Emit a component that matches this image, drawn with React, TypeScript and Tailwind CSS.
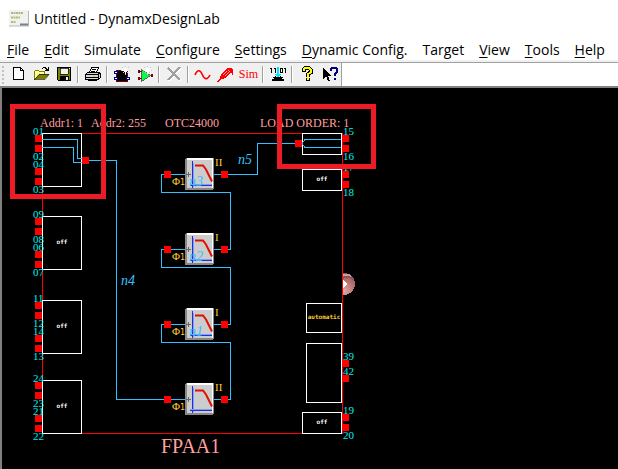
import type { ReactNode } from "react";

const MENUS: { label: string; hot: number }[] = [
  { label: "File", hot: 0 },
  { label: "Edit", hot: 0 },
  { label: "Simulate", hot: -1 },
  { label: "Configure", hot: 0 },
  { label: "Settings", hot: 0 },
  { label: "Dynamic Config.", hot: 0 },
  { label: "Target", hot: -1 },
  { label: "View", hot: 0 },
  { label: "Tools", hot: 0 },
  { label: "Help", hot: 0 },
];

function Glyph({ children }: { children: ReactNode }) {
  return (
    <svg width="17" height="17" viewBox="0 0 17 17" shapeRendering="crispEdges" fill="none" aria-hidden="true" className="shrink-0 overflow-visible">
      {children}
    </svg>
  );
}

function Tool({ name, disabled, children }: { name: string; disabled?: boolean; children: ReactNode }) {
  return (
    <button type="button" title={name} aria-label={name} disabled={disabled} className="flex h-[23px] w-[23px] shrink-0 items-center justify-center">
      {children}
    </button>
  );
}

function Separator() {
  return (
    <div className="flex h-[23px] w-[6px] shrink-0 justify-center py-[3px]">
      <div className="w-px bg-[#a0a0a0]" />
      <div className="w-px bg-white" />
    </div>
  );
}

function Sparkle({ x, y }: { x: number; y: number }) {
  return (
    <g transform={`translate(${x} ${y})`}>
      <path d="M4.5 0v9M0 4.5h9M1.5 1.5l6 6M7.5 1.5l-6 6" stroke="#c8c8c8" />
      <path d="M4 1h1v2h-1zM1 4h7v1h-7zM4 6h1v2h-1zM2 2h1v1h-1zM6 2h1v1h-1zM3 3h3v3h-3z" fill="#fff" />
    </g>
  );
}

function Toolbar() {
  return (
    <div role="toolbar" aria-label="Main" className="flex h-[23px] w-fit border-r border-[#a0a0a0] bg-[#f0f0f0]">
      <div className="flex w-[6px] flex-col items-center justify-center gap-[2px]">
        {[0, 1, 2, 3, 4].map((i) => (
          <div key={i} className="h-[2px] w-[2px] bg-[#c2c2c2]" />
        ))}
      </div>
      <Tool name="New">
        <Glyph>
          <path d="M4.500 1.500h7l3 3v9h-10z" fill="#fff" stroke="#000" />
          <path d="M11.500 1.500v3h3" stroke="#000" />
        </Glyph>
      </Tool>
      <Tool name="Open">
        <Glyph>
          <path d="M2.500 13.500v-8l1-1h3l1 1h5v3" fill="#ffff99" stroke="#808000" />
          <path d="M3 13l4-5h10l-4 5z" fill="#808000" />
          <path d="M2 13.500h11l4-5h-10l-4 5" stroke="#000" strokeWidth="0.6" shapeRendering="auto" />
          <path d="M10 2h1v-1h3v1h1v1h1v-2h1v4h-4v-1h1v-1h-1v-1h-2v1h-1z" fill="#000" />
        </Glyph>
      </Tool>
      <Tool name="Save">
        <Glyph>
          <path d="M2.500 1.500h13v13h-12l-1-1z" fill="#808000" stroke="#000" />
          <path d="M5 2h8v6h-8z" fill="#f0f0f0" stroke="#000" strokeWidth="0.7" />
          <path d="M5 10h9v4h-9z" fill="#000" />
          <path d="M11 11h2v3h-2zM14 2h1v1h-1z" fill="#f0f0f0" />
        </Glyph>
      </Tool>
      <Separator />
      <Tool name="Print">
        <Glyph>
          <path d="M5.500 6.500l2-5h7l-2 5z" fill="#fff" stroke="#000" />
          <path d="M8 3.500h4M7 5.500h4" stroke="#000" />
          <path d="M1.500 8.500l2-2h12l1 1v4l-2 2h-13z" fill="#d8d8d8" stroke="#000" />
          <path d="M1 8.500h13v5M2 11.500h12M14 8.500l2-2M3.500 14.500h9l2-2" stroke="#000" />
          <path d="M9 10h2v1h-2z" fill="#d8c800" />
        </Glyph>
      </Tool>
      <Separator />
      <Tool name="New chip">
        <Glyph>
          <path d="M3.500 4.500h11v11h-11z" fill="#000" stroke="#700000" />
          <path d="M1.500 5.500h3v2h-3zM1.500 11.500h3v2h-3zM13.500 11.500h3v2h-3z" fill="#fff" stroke="#000080" />
          <Sparkle x={8} y={0} />
        </Glyph>
      </Tool>
      <Tool name="New module">
        <Glyph>
          <path d="M5.500 3.500v12l9-6z" fill="#00ff40" stroke="#606060" />
          <path d="M2.500 5.500h3M2.500 12.500h3M14.500 9.500h2" stroke="#800000" />
          <path d="M2 4h2v3h-2zM2 11h2v3h-2zM15 8h2v3h-2z" fill="#800000" />
          <Sparkle x={7} y={0} />
        </Glyph>
      </Tool>
      <Separator />
      <Tool name="Delete" disabled>
        <Glyph>
          <path d="M4 3l12 12M16 2L4 15" stroke="#fff" strokeWidth="2" />
          <path d="M3 2l12 12M15 1L3 14" stroke="#a0a0a0" strokeWidth="2" />
        </Glyph>
      </Tool>
      <Separator />
      <Tool name="Signal generator">
        <Glyph>
          <path d="M1 9c2-5 5-6 7-1s5 7 8 1" stroke="#f00" strokeWidth="1.6" shapeRendering="auto" />
        </Glyph>
      </Tool>
      <Tool name="Probe">
        <Glyph>
          <path d="M1 16l4-5" stroke="#f00" strokeWidth="1.5" />
          <path d="M3 12l1-4 7-6h3l2 2v6l-2-4-6 6-3 1z" fill="#f00" />
          <path d="M6 9l4-4M8 10l4-4M11 4l2 2" stroke="#f0f0f0" strokeWidth="0.7" />
        </Glyph>
      </Tool>
      <Tool name="Simulate">
        <span className="font-['Liberation_Serif',serif] text-[12px] leading-[17px] text-[#f00]">Sim</span>
      </Tool>
      <Separator />
      <Tool name="Download">
        <Glyph>
          <path d="M1 2h2v5h-1v-4h-1zM5 2h2v5h-1v-4h-1zM11 2h3v5h-3zM15 2h2v5h-1v-4h-1z" fill="#000" />
          <path d="M12 3h1v3h-1z" fill="#fff" />
          <path d="M4 11h2v-1h1v1h4v-1h1v1h2v1h-1v1h2v2h-12v-2h2v-1h-1z" fill="#000" />
          <path d="M8 1h2v7h2l-3 4-3-4h2z" fill="#00e5ff" />
        </Glyph>
      </Tool>
      <Separator />
      <Tool name="About">
        <Glyph>
          <path d="M5.500 6V3.500l2-2h3l2 2v3l-3 2v2M9.500 12v3" stroke="#000" strokeWidth="4" />
          <path d="M5.500 5V3.500l2-2h3l2 2v3l-3 2v2M9.500 12v2" stroke="#ff0" strokeWidth="2" />
        </Glyph>
      </Tool>
      <Tool name="Context help">
        <Glyph>
          <path d="M2 1v12l3-3 2 5h2l-2-5h3z" fill="#000" />
          <path d="M10 5V3l1-1h4l1 1v3l-2 2v2M14 12v2" stroke="#000080" strokeWidth="2" />
        </Glyph>
      </Tool>
    </div>
  );
}

const WIRE = "#33c0ff";

type Cell = { x: number; y: number; w: number; h: number; text?: string; tint?: string };

const CELLS: Cell[] = [
  { x: 42, y: 133, w: 39, h: 53 },
  { x: 42, y: 216, w: 39, h: 53, text: "off" },
  { x: 42, y: 300, w: 39, h: 53, text: "off" },
  { x: 42, y: 380, w: 39, h: 53, text: "off" },
  { x: 302, y: 133, w: 39, h: 21 },
  { x: 302, y: 169, w: 39, h: 21, text: "off" },
  { x: 306, y: 303, w: 35, h: 29, text: "automatic", tint: "#ffcc33" },
  { x: 306, y: 343, w: 35, h: 59 },
  { x: 302, y: 412, w: 39, h: 21, text: "off" },
];

const LEFT_BANKS: { y: number; pins: [string, string, string, string] }[] = [
  { y: 133, pins: ["01", "02", "04", "03"] },
  { y: 216, pins: ["09", "08", "06", "07"] },
  { y: 300, pins: ["11", "12", "14", "13"] },
  { y: 380, pins: ["24", "23", "21", "22"] },
];

const RIGHT_LABELS: [string, number][] = [
  ["15", 135],
  ["16", 160],
  ["17", 171],
  ["18", 196],
  ["39", 360],
  ["42", 375],
  ["19", 414],
  ["20", 439],
];

const RIGHT_PINS = [135, 145, 171, 181, 360, 375, 414, 424];

const MODULES: { y: number; phase: string; net?: string }[] = [
  { y: 174, phase: "II", net: "n3" },
  { y: 249, phase: "I", net: "n2" },
  { y: 324, phase: "I", net: "n1" },
  { y: 399, phase: "II" },
];

function Pin({ x, y }: { x: number; y: number }) {
  return <rect x={x} y={y} width="7" height="7" fill="#f00" />;
}

function FilterModule({ y, phase, net }: { y: number; phase: string; net?: string }) {
  return (
    <g transform={`translate(0 ${y})`}>
      <path d="M171 .5h14M213 .5h8" stroke={WIRE} />
      <Pin x={164} y={-3} />
      <Pin x={221} y={-3} />
      <rect x="185" y="-16" width="29" height="32" rx="2" fill="#888" />
      <path d="M187-16h26v30h-26z" fill="#fff" />
      <rect x="187" y="-14" width="25" height="28" fill="#ccc" />
      <path d="M192.500-13v27" stroke="#2a2ad8" strokeWidth="1" />
      <path d="M193.500-11v24M190 10.500h22" stroke="#7aa0f0" />
      <path d="M190 11.500h22" stroke="#2a2ad8" />
      <path d="M195-8.500h8l3 4 6 12" stroke="#e01000" strokeWidth="2" shapeRendering="auto" />
      <path d="M186 .5h5M188.500-2v5" stroke="#666" />
      <g className="font-['Liberation_Serif',serif]" fill="#ffcc33">
        <text x="172" y="11" fontSize="11">
          Φ<tspan className="font-['DejaVu_Sans',sans-serif]" fontSize="8">1</tspan>
        </text>
        <text x="215" y="-8" fontSize="11">{phase}</text>
      </g>
      {net && (
        <text x="189" y="12" fontSize="14" fill={WIRE} className="font-['Liberation_Serif',serif] italic">
          {net}
        </text>
      )}
    </g>
  );
}

function Schematic() {
  return (
    <svg width="616" height="380" viewBox="2 88 616 380" shapeRendering="crispEdges" fill="none" className="block" role="img" aria-label="FPAA1 schematic">
      <defs>
        <radialGradient id="ball" cx="0.5" cy="0.8" r="0.8">
          <stop offset="0" stopColor="#e0a8a8" />
          <stop offset="0.5" stopColor="#bb7878" />
          <stop offset="1" stopColor="#8c5555" />
        </radialGradient>
        <clipPath id="ball-half">
          <path d="M343 270h20v30h-20z" />
        </clipPath>
      </defs>

      <g clipPath="url(#ball-half)">
        <circle cx="344" cy="284" r="11" fill="url(#ball)" />
        <path d="M343 278c4-2 8-1 11 2" stroke="#8a5656" strokeWidth="2" />
        <path d="M343 275c3-1 6 0 8 1" stroke="#c89c9c" strokeWidth="2" />
        <path d="M343 280l5 4-5 4z" fill="#fff" />
      </g>

      <path d="M42.500 133.500h300v300h-300z" stroke="#f00" />
      {CELLS.map((c) => (
        <g key={`${c.x}-${c.y}`}>
          <rect x={c.x + 0.5} y={c.y + 0.5} width={c.w} height={c.h} fill="#000" stroke="#fff" />
          {c.text && (
            <text x={c.x + c.w / 2 + 0.5} y={c.y + Math.floor(c.h / 2)} dy="2" textAnchor="middle" fontSize="6" fill={c.tint ?? "#fff"} className="font-['DejaVu_Sans_Mono',monospace] font-bold">
              {c.text}
            </text>
          )}
        </g>
      ))}

      <g stroke={WIRE}>
        <path d="M42 139.500h35.500v19h4.500M42 147.500h31.500v15h8.500" />
        <path d="M89 160.500h27.500v239h48" />
        <path d="M228 399.500h2.500v-57h-69v-18h3" />
        <path d="M228 324.500h2.500v-57h-69v-18h3" />
        <path d="M228 249.500h2.500v-57h-69v-18h3" />
        <path d="M228 174.500h29.500v-31h38" />
        <path d="M302 143.500l3-4h36M302 143.500l3 4h36" />
      </g>
      <Pin x={82} y={157} />
      <Pin x={295} y={140} />

      {MODULES.map((m) => (
        <FilterModule key={m.y} {...m} />
      ))}

      {LEFT_BANKS.map((b) => [2, 12, 35, 45].map((dy) => <Pin key={`${b.y}-${dy}`} x={35} y={b.y + dy} />))}
      {RIGHT_PINS.map((y) => (
        <Pin key={y} x={342} y={y} />
      ))}

      <g fill="#00f0f0" fontSize="11" className="font-['Liberation_Serif',serif]">
        {LEFT_BANKS.map((b) =>
          b.pins.map((p, i) => (
            <text key={p} x="33" y={b.y + [2, 27, 35, 60][i]}>
              {p}
            </text>
          )),
        )}
        {RIGHT_LABELS.map(([p, y]) => (
          <text key={p} x="343" y={y}>
            {p}
          </text>
        ))}
      </g>

      <g fill={WIRE} fontSize="14" className="font-['Liberation_Serif',serif] italic">
        <text x="238" y="164">n5</text>
        <text x="121" y="285">n4</text>
      </g>

      <g fill="#ff9f9f" className="font-['Liberation_Serif',serif]">
        <text x="40" y="127" fontSize="12">Addr1: 1</text>
        <text x="91" y="127" fontSize="12">Addr2: 255</text>
        <text x="165" y="127" fontSize="12">OTC24000</text>
        <text x="260" y="127" fontSize="12">LOAD ORDER: 1</text>
        <text x="161" y="453" fontSize="20">FPAA1</text>
      </g>

      <g stroke="#ed1c24" strokeWidth="5">
        <rect x="12.5" y="106.5" width="91" height="90" />
        <rect x="279.5" y="106.5" width="94" height="60" />
      </g>
    </svg>
  );
}

export default function App() {
  return (
    <div className="flex min-h-screen flex-col bg-white font-['Open_Sans','Noto_Sans',sans-serif] text-black">
      <header className="flex h-[37px] items-center gap-[5px] pl-[9px]">
        <svg width="20" height="17" viewBox="0 0 20 17" aria-hidden="true">
          <rect x="0" y="0" width="20" height="16" fill="#f1f2ee" />
          <path d="M0 16h20M19.500 1v15" stroke="#b5b8b5" />
          <path d="M2 3h12M2 7.500h9M2 12h5" stroke="#a9bd7c" strokeWidth="2" strokeDasharray="2 0.5" />
          <path d="M11 14.500h8" stroke="#77808a" strokeWidth="2" />
        </svg>
        <h1 className="text-[14px] leading-[20px]">Untitled - DynamxDesignLab</h1>
      </header>
      <nav className="flex h-[23px] items-end gap-[15px] pl-[7px]">
        {MENUS.map((m) => (
          <button key={m.label} type="button" className="text-[14px] leading-[20px] whitespace-nowrap">
            {m.hot === 0 ? (
              <>
                <span className="underline underline-offset-2">{m.label[0]}</span>
                {m.label.slice(1)}
              </>
            ) : (
              m.label
            )}
          </button>
        ))}
      </nav>
      <div className="border-t-2 border-[#f0f0f0]">
        <div className="border-t border-[#a0a0a0]">
          <Toolbar />
        </div>
      </div>
      <main className="flex-1 overflow-hidden border-t-2 border-l-2 border-[#808080] bg-black">
        <Schematic />
      </main>
    </div>
  );
}
